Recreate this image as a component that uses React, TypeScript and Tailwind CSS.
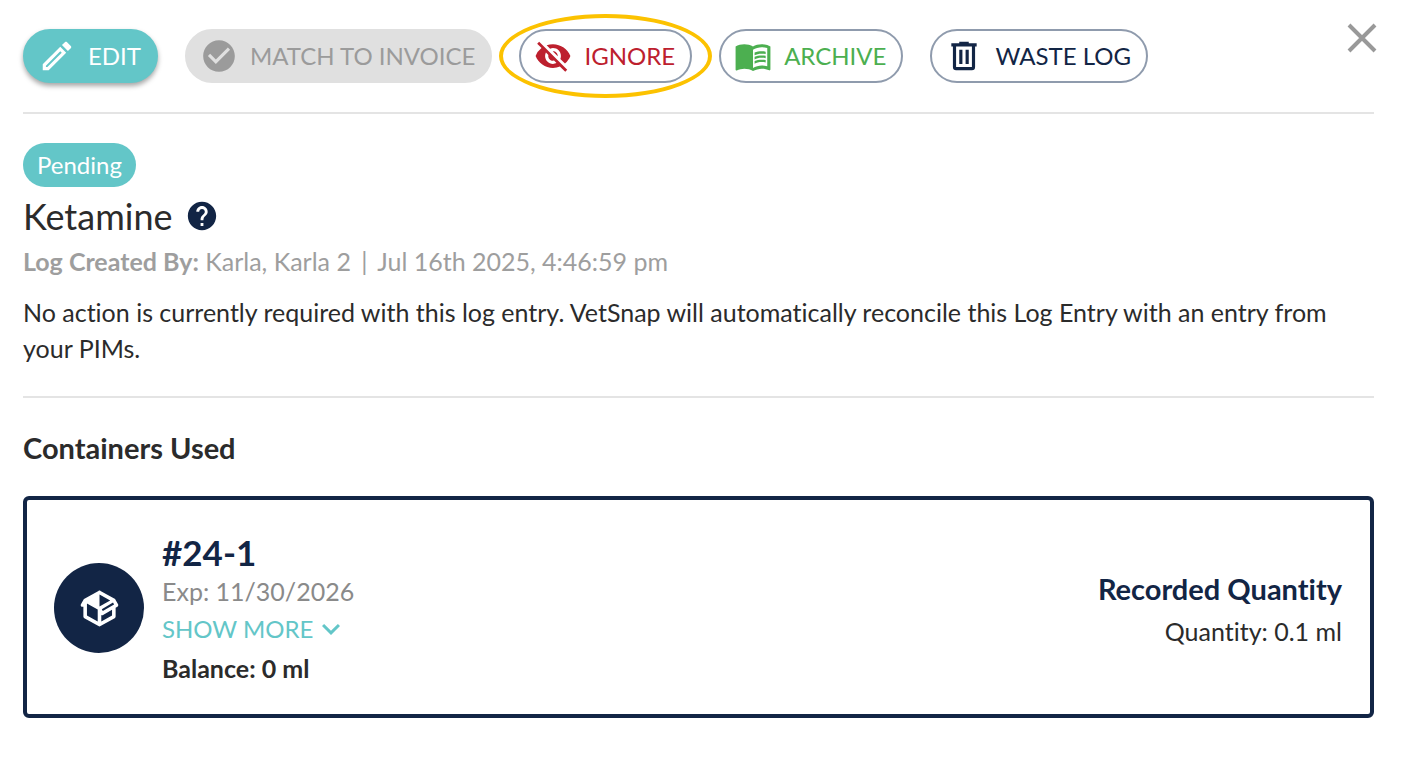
import type { ReactNode } from "react";
import { MdCheckCircle, MdHelp, MdMenuBook, MdVisibilityOff } from "react-icons/md";

const PENCIL =
  "M14.06,9L15,9.94L5.92,19H5V18.08L14.06,9M17.66,3C17.41,3 17.15,3.1 16.96,3.29L15.13,5.12L18.88,8.87L20.71,7.04C21.1,6.65 21.1,6 20.71,5.63L18.37,3.29C18.17,3.09 17.92,3 17.66,3M14.06,6.19L3,17.25V21H6.75L17.81,9.94L14.06,6.19Z";
const TRASH =
  "M9,3V4H4V6H5V19A2,2 0 0,0 7,21H17A2,2 0 0,0 19,19V6H20V4H15V3H9M7,6H17V19H7V6M9,8V17H11V8H9M13,8V17H15V8H13Z";
const PACKAGE =
  "M2,10.96C1.5,10.68 1.35,10.07 1.63,9.59L3.13,7C3.24,6.8 3.41,6.66 3.6,6.58L11.43,2.18C11.59,2.06 11.79,2 12,2C12.21,2 12.41,2.06 12.57,2.18L20.47,6.62C20.66,6.72 20.82,6.88 20.91,7.08L22.36,9.6C22.64,10.08 22.47,10.69 22,10.96L21,11.54V16.5C21,16.88 20.79,17.21 20.47,17.38L12.57,21.82C12.41,21.94 12.21,22 12,22C11.79,22 11.59,21.94 11.43,21.82L3.53,17.38C3.21,17.21 3,16.88 3,16.5V10.96C2.7,11.13 2.32,11.14 2,10.96M12,4.15V4.15L12,10.85V10.85L17.96,7.5L12,4.15M5,15.91L11,19.29V12.58L5,9.21V15.91M19,15.91V12.69L14,15.59C13.67,15.77 13.3,15.76 13,15.6V19.29L19,15.91M13.85,13.36L20.13,9.73L19.55,8.72L13.27,12.35L13.85,13.36Z";

function Glyph({ d, className }: { d: string; className: string }) {
  return (
    <svg viewBox="0 0 24 24" fill="currentColor" aria-hidden="true" className={className}>
      <path d={d} />
    </svg>
  );
}

function ActionButton({
  icon,
  label,
  className,
  disabled,
}: {
  icon: ReactNode;
  label: string;
  className: string;
  disabled?: boolean;
}) {
  return (
    <button
      type="button"
      disabled={disabled}
      className={`flex h-[54px] items-center gap-3 whitespace-nowrap rounded-full border-2 pl-[13px] pr-[15px] text-[24px] leading-8 ${className}`}
    >
      {icon}
      {label}
    </button>
  );
}

export default function App() {
  return (
    <main className="bg-white pl-[23px] pr-[27px] pt-7 pb-10 font-['Lato',sans-serif] text-[#2b2b2b] [font-variant-ligatures:none]">
      <header className="flex items-start justify-between border-b-2 border-[#e4e4e4] pb-[29px]">
        <div className="flex gap-[27px] pt-px">
          <ActionButton
            icon={<Glyph d={PENCIL} className="size-[38px]" />}
            label="EDIT"
            className="border-[#63c6c8] bg-[#63c6c8] text-white shadow-[0_3px_5px_rgba(0,0,0,0.35)]"
          />
          <ActionButton
            disabled
            icon={<MdCheckCircle className="size-[38px]" />}
            label="MATCH TO INVOICE"
            className="border-[#e0e0e0] bg-[#e0e0e0] text-[#9b9b9b]"
          />
          <div className="relative">
            <ActionButton
              icon={<MdVisibilityOff className="size-[38px]" />}
              label="IGNORE"
              className="border-[#8f9bad] text-[#bd202e]"
            />
            <div className="pointer-events-none absolute -inset-x-5 -inset-y-[15px] rounded-[50%] border-4 border-[#fcc200]" />
          </div>
          <ActionButton
            icon={<MdMenuBook className="size-[38px]" />}
            label="ARCHIVE"
            className="border-[#8f9bad] text-[#4caf50]"
          />
          <ActionButton
            icon={<Glyph d={TRASH} className="size-[38px]" />}
            label="WASTE LOG"
            className="border-[#8f9bad] text-[#122545]"
          />
        </div>
        <button type="button" aria-label="Close" className="-mr-2.5 -mt-3 p-1 text-[#999]">
          <svg viewBox="0 0 36 36" fill="none" stroke="currentColor" strokeWidth="4" className="size-9" aria-hidden="true">
            <path d="M5 5 31 31M31 5 5 31" />
          </svg>
        </button>
      </header>

      <section className="border-b-2 border-[#e4e4e4] pt-[29px] pb-[30px]">
        <span className="inline-flex h-11 items-center rounded-full bg-[#63c6c8] px-[14px] text-[24px] text-white">
          Pending
        </span>
        <h1 className="mt-1.5 flex items-center gap-3 text-[36px] leading-[46px]">
          Ketamine
          <MdHelp className="size-[34px] text-[#122545]" aria-label="Help" />
        </h1>
        <p className="mt-1 text-[25px] leading-9 text-[#9e9e9e]">
          <b>Log Created By:</b> Karla, Karla 2 <span className="mx-1">|</span> Jul 16th 2025, 4:46:59 pm
        </p>
        <p className="mt-[15px] text-[25px] leading-9">
          No action is currently required with this log entry. VetSnap will automatically reconcile this Log Entry with an
          entry from your PIMs.
        </p>
      </section>

      <section className="pt-[30px]">
        <h2 className="text-[29px] font-bold leading-10">Containers Used</h2>
        <article className="mt-7 flex items-center gap-[18px] rounded-md border-4 border-[#122545] pl-[27px] pr-7 pt-8 pb-[26px]">
          <div className="mb-1 flex size-[90px] shrink-0 items-center justify-center rounded-full bg-[#122545] text-white">
            <Glyph d={PACKAGE} className="size-[43px]" />
          </div>
          <div className="flex-1">
            <h3 className="text-[35px] font-bold leading-10 text-[#122545]">#24-1</h3>
            <p className="text-[25px] leading-[38px] text-[#8a8a8a]">Exp: 11/30/2026</p>
            <button type="button" className="flex items-center text-[24px] leading-[38px] text-[#63c6c8]">
              SHOW MORE
              <svg viewBox="0 0 24 24" fill="currentColor" className="size-9" aria-hidden="true">
                <path d="M7.41 8.59 12 13.17l4.59-4.58L18 10l-6 6-6-6z" />
              </svg>
            </button>
            <p className="text-[25px] font-bold leading-10">Balance: 0 ml</p>
          </div>
          <div className="text-right">
            <p className="text-[29px] font-bold leading-[43px] text-[#122545]">Recorded Quantity</p>
            <p className="text-[25px] leading-[43px]">Quantity: 0.1 ml</p>
          </div>
        </article>
      </section>
    </main>
  );
}
